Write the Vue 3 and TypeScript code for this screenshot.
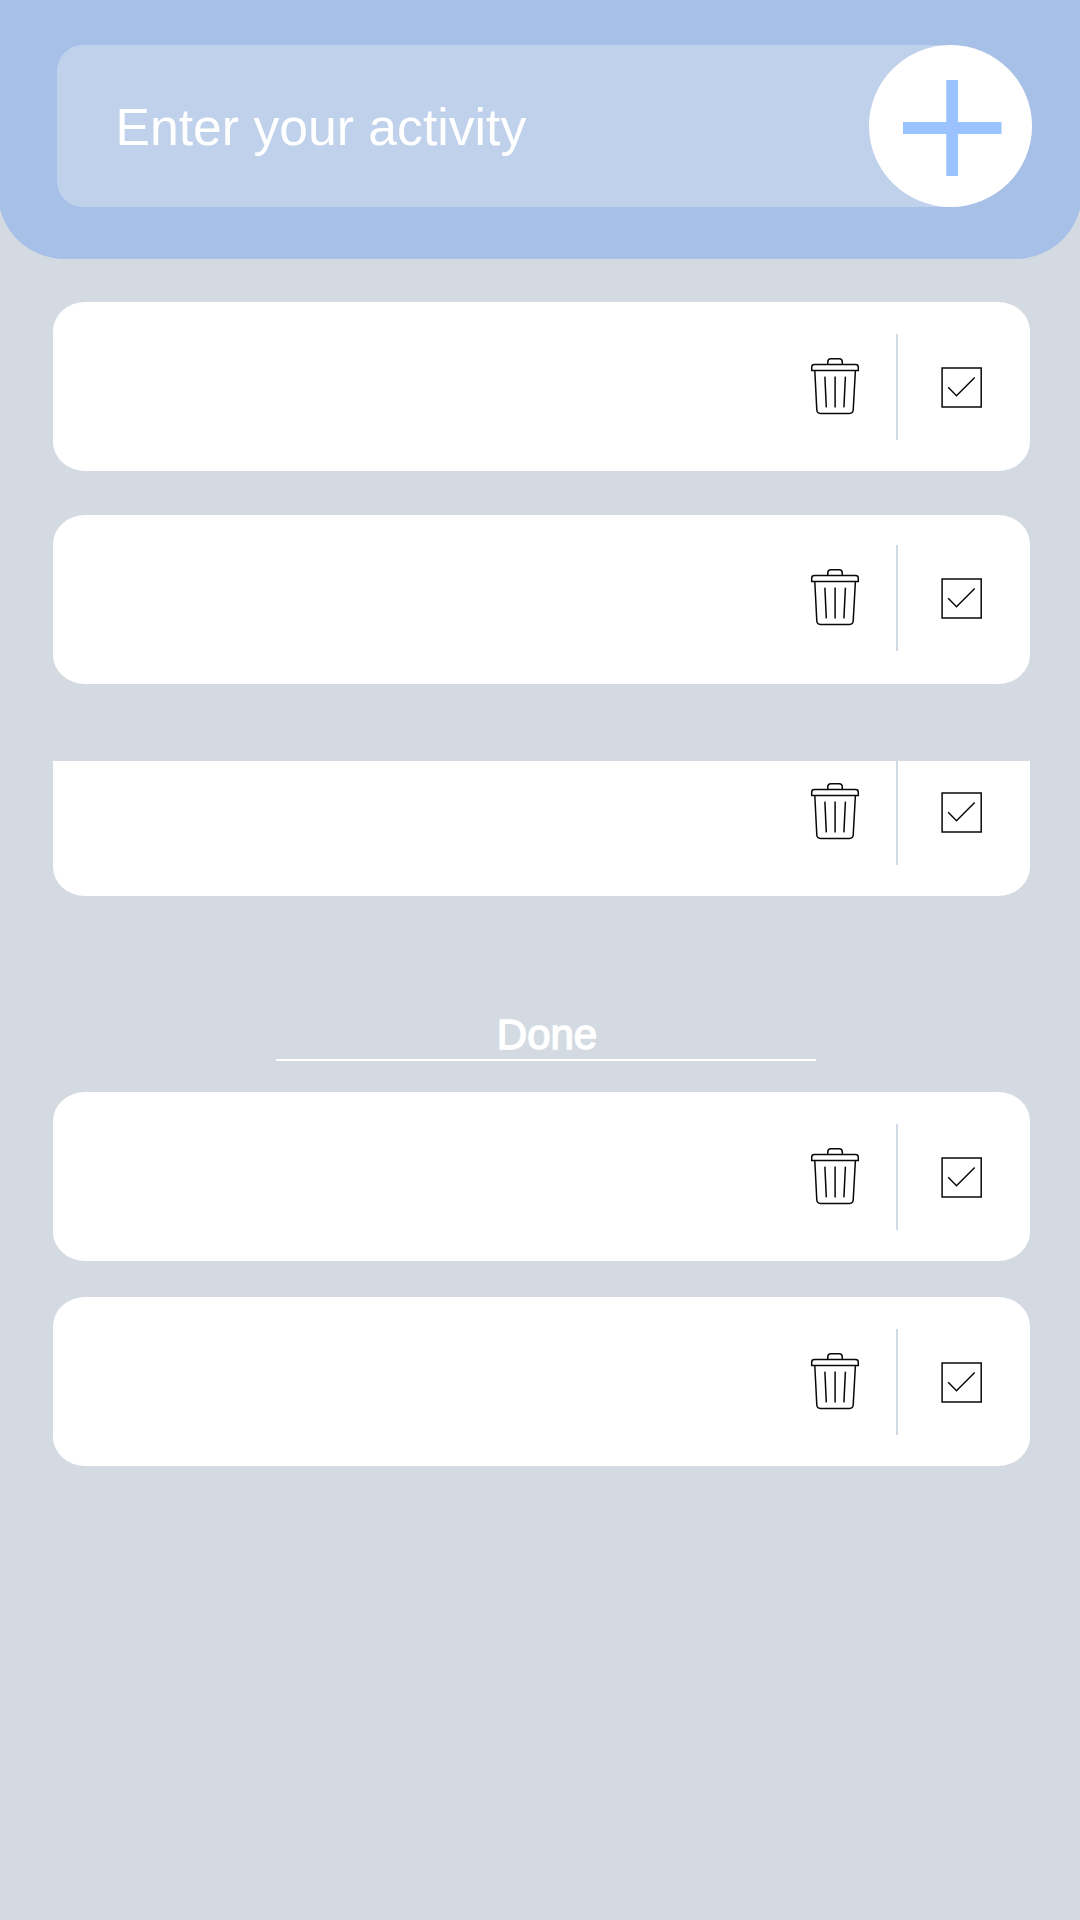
<script setup lang="ts">
import { ref } from 'vue'

interface Task {
  id: number
  variant: string
}

const draft = ref<string>('')
const pending = ref<Task[]>([
  { id: 1, variant: 'first' },
  { id: 2, variant: 'second' },
  { id: 3, variant: 'clipped' },
])
const done = ref<Task[]>([
  { id: 4, variant: 'first' },
  { id: 5, variant: 'last' },
])
</script>

<template>
  <main class="app">
    <header class="header">
      <div class="field">
        <span class="placeholder">{{ draft || 'Enter your activity' }}</span>
        <button class="add" type="button" aria-label="Add">
          <svg width="163" height="162" viewBox="0 0 163 162">
            <path d="M34 77h98.5v12H34z M77.3 35h11.7v96H77.3z" fill="#99c2ff" />
          </svg>
        </button>
      </div>
    </header>

    <template v-for="(group, index) in [pending, done]" :key="index">
      <h2 v-if="index === 1" class="heading"><span>Done</span></h2>
      <section class="list" :class="{ finished: index === 1 }">
        <article v-for="task in group" :key="task.id" class="card" :class="task.variant">
          <div class="actions">
            <svg class="trash" width="52" height="60" viewBox="809 356 52 60">
              <path d="M827.8 364.5v-2.6q0-3.1 3.1-3.1h8.2q3.2 0 3.2 3.1v2.6" />
              <path d="M811.7 370.6v-3.3q0-2.7 2.7-2.7h41.2q2.7 0 2.7 2.7v3.3z" />
              <path d="M814.8 370.6l2 39.4q.3 3.4 3.6 3.4h29.2q3.3 0 3.6-3.4l2.2-39.4" />
              <path d="M824.9 376.6l1.4 30.8M835.1 376.6v30.8M845.4 376.6l-1.5 30.8" />
            </svg>
            <i class="divider"></i>
            <svg class="check" width="44" height="44" viewBox="939 366.3 44 44">
              <path d="M942.1 368.3h39.1v39.1h-39.1z" />
              <path d="M948.2 387.6l8.3 8.4 18.2-18.2" />
            </svg>
          </div>
        </article>
      </section>
    </template>
  </main>
</template>

<style>
body {
  margin: 0;
  background: #d3dae2;
}
</style>

<style scoped>
.app {
  box-sizing: border-box;
  width: 1080px;
  height: 1920px;
  overflow: hidden;
  background: #d3dae2;
  font-family: 'Liberation Sans', Arial, sans-serif;
}
.header {
  box-sizing: border-box;
  width: 1084px;
  height: 258.5px;
  margin-left: -2px;
  padding: 45px 50px 0 58.5px;
  border-radius: 0 0 67px 67px / 0 0 66px 66px;
  background: #a7c0e8;
}
.field {
  display: flex;
  align-items: center;
  justify-content: space-between;
  height: 162px;
  padding-left: 59px;
  border-radius: 26px 81px 81px 26px;
  background: #c0d1eb;
}
.placeholder {
  padding-top: 2px;
  font-size: 51.7px;
  line-height: 60px;
  color: #fff;
  white-space: nowrap;
}
.add {
  width: 163px;
  height: 162px;
  padding: 0;
  border: 0;
  border-radius: 50%;
  background: #fff;
}
.add svg {
  display: block;
}
.list {
  display: flex;
  flex-direction: column;
  padding: 43.5px 50px 0 53px;
}
.finished {
  padding-top: 31px;
}
.card {
  display: flex;
  justify-content: flex-end;
  height: 169px;
  border-radius: 32px / 29px;
  background: #fff;
}
.actions {
  display: flex;
  align-items: flex-start;
  padding: 32px 47px 0 0;
}
.second {
  margin-top: 44px;
}
.second .actions {
  padding-top: 30px;
}
.clipped {
  height: 135px;
  margin-top: 77px;
  border-radius: 0 0 32px 32px / 0 0 29px 29px;
}
.clipped .actions {
  padding-top: 0;
}
.clipped .divider {
  height: 104px;
}
.clipped .trash {
  margin-top: 20px;
}
.clipped .check {
  margin-top: 30px;
}
.last {
  margin-top: 36px;
}
.trash,
.check {
  fill: none;
  stroke: #080808;
  stroke-width: 1.5;
}
.trash {
  margin-top: 22px;
}
.divider {
  width: 2px;
  height: 106px;
  margin: 0 41px 0 35px;
  background: #d1dbe5;
}
.check {
  margin-top: 32px;
}
.heading {
  box-sizing: border-box;
  width: 540px;
  height: 52px;
  margin: 113px 0 0 276px;
  padding-left: 2px;
  border-bottom: 2px solid #fff;
  color: #fff;
  font-size: 42px;
  font-weight: 400;
  line-height: 52px;
  text-align: center;
  -webkit-text-stroke: 1.5px #fff;
}
</style>
